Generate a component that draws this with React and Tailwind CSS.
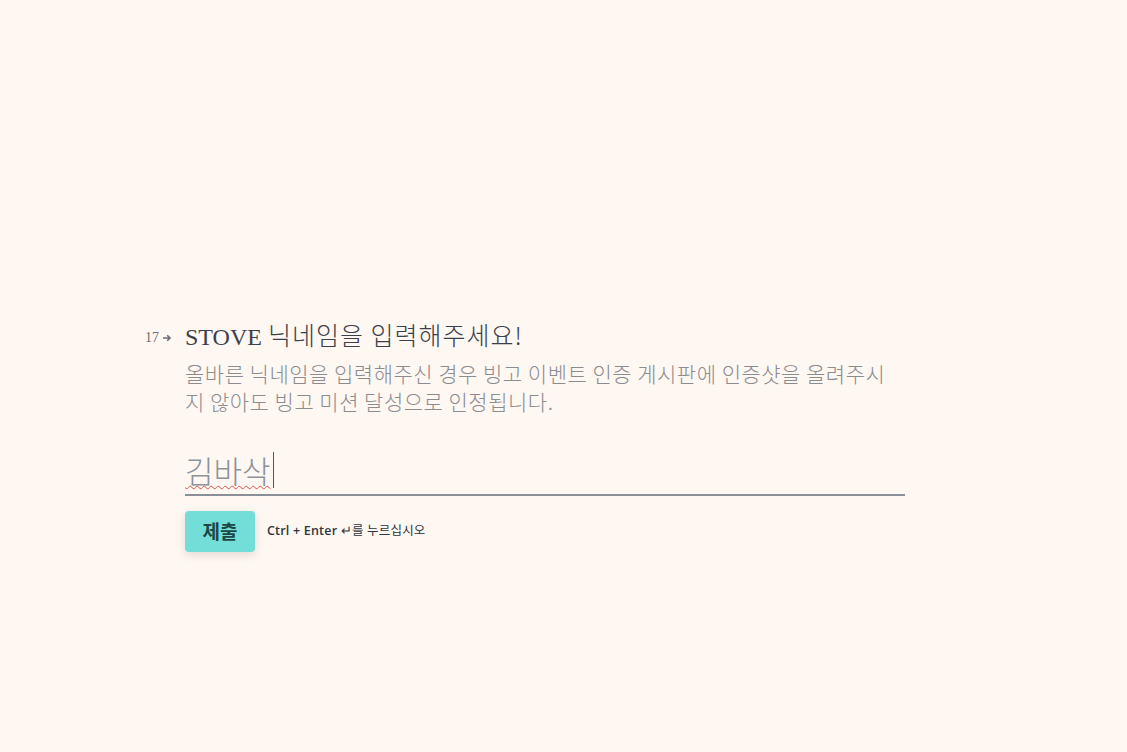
export default function App() {
  return (
    <main className="flex h-[752px] w-full flex-col bg-[#fff7f1] pl-[145px] pt-[318px]">
      <div className="flex w-[760px] items-start">
        <div className="flex w-[40px] items-center gap-[3px] pt-[13px] font-['Liberation_Serif',serif] text-[14px] leading-none text-[#6e6e73]">
          <span>17</span>
          <svg width="10" height="10" viewBox="0 0 10 10" className="text-[#6e6e73]">
            <path d="M1 5h7M5.2 2.2 8 5 5.2 7.8" fill="none" stroke="currentColor" strokeWidth="1.6" />
          </svg>
        </div>
        <div className="flex w-[720px] flex-col">
          <h1 className="font-['Liberation_Serif','Noto_Sans_CJK_KR',serif] text-[24px] leading-[32px] text-[#3a414c]">
            STOVE{" "}
            <span className="font-['Noto_Sans_CJK_KR',sans-serif] text-[25px] font-light tracking-[1px]">
              닉네임을 입력해주세요!
            </span>
          </h1>
          <p className="mt-[6px] w-[712px] font-['Noto_Sans_CJK_KR',sans-serif] text-[21px] font-light leading-[28px] tracking-[0.5px] text-[#8a8c90]">
            올바른 닉네임을 입력해주신 경우 빙고 이벤트 인증 게시판에 인증샷을 올려주시지 않아도 빙고 미션 달성으로 인정됩니다.
          </p>
          <div className="mt-[35px] flex items-center border-b-2 border-[#8b9098] pb-[4px]">
            <span className="font-['Noto_Sans_CJK_KR',sans-serif] text-[31px] font-light leading-[40px] text-[#8b9299] underline decoration-wavy decoration-[#e05050] decoration-1 underline-offset-[2px]">
              김바삭
            </span>
            <span className="ml-[2px] h-[36px] w-px bg-[#555]" />
          </div>
          <div className="mt-[15px] flex items-center gap-[12px]">
            <button className="h-[41px] w-[70px] rounded-[4px] bg-[#73ded8] font-['Noto_Sans_CJK_KR',sans-serif] text-[19px] font-bold text-[#1b4745] shadow-[0_3px_10px_rgba(0,0,0,0.12)]">
              제출
            </button>
            <span className="font-['Open_Sans','Noto_Sans_CJK_KR',sans-serif] text-[12.5px] font-semibold tracking-[0.2px] text-[#2d3540]">
              Ctrl + Enter <span className="font-normal">↵</span>
              <span className="font-normal">를 누르십시오</span>
            </span>
          </div>
        </div>
      </div>
    </main>
  );
}
